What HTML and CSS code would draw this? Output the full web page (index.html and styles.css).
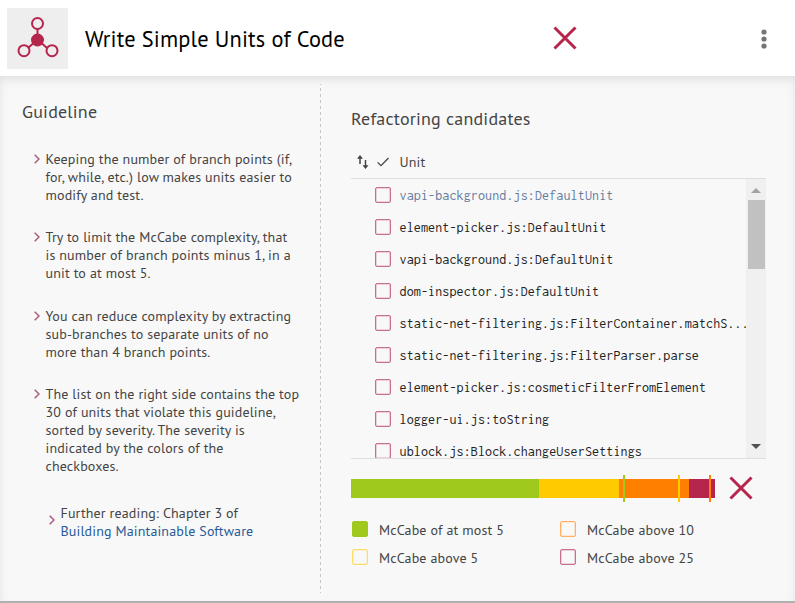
FILE: index.html
```html
<!DOCTYPE html>
<html lang="en">
<head>
<meta charset="utf-8">
<title>Write Simple Units of Code</title>
<link rel="stylesheet" href="styles.css">
</head>
<body>
<svg class="defs" width="0" height="0"><symbol id="cross" viewBox="0 0 24 24"><path d="M1.500 1.500l21 21M22.500 1.500l-21 21" fill="none" stroke="#b5254c" stroke-width="3"/></symbol>
<symbol id="chev" viewBox="0 0 6 10"><path d="M.7 .8L5 5 .7 9.2" fill="none" stroke="#a85b7b" stroke-width="1.5"/></symbol></svg>
<div class="card">
<header class="header">
  <div class="logo"><svg width="61" height="61" viewBox="0 0 61 61" fill="none" stroke="#b5254c" stroke-width="2"><path d="M30.500 21v11M30 32l-9 8M31 32l9 8"/><circle cx="30.500" cy="15.500" r="5.500"/><circle cx="17" cy="42.700" r="5.500"/><circle cx="45" cy="42.700" r="5.500"/><circle cx="30.500" cy="32" r="5.500" fill="#b5254c"/></svg></div>
  <h1 class="title">Write Simple Units of Code</h1>
  <svg class="status" width="24" height="24"><use href="#cross"/></svg>
  <svg class="menu" width="6" height="20" viewBox="0 0 6 20" fill="#757575"><circle cx="3" cy="3" r="2.600"/><circle cx="3" cy="10" r="2.600"/><circle cx="3" cy="17" r="2.600"/></svg>
</header>
<main class="content">
  <section class="guide">
    <h2 class="heading">Guideline</h2>
    <ul class="tips">
      <li class="tip"><svg class="chev"><use href="#chev"/></svg><p>Keeping the number of branch points (if,<br>for, while, etc.) low makes units easier to<br>modify and test.</p></li>
      <li class="tip"><svg class="chev"><use href="#chev"/></svg><p>Try to limit the McCabe complexity, that<br>is number of branch points minus 1, in a<br>unit to at most 5.</p></li>
      <li class="tip tip-low"><svg class="chev"><use href="#chev"/></svg><p>You can reduce complexity by extracting<br>sub-branches to separate units of no<br>more than 4 branch points.</p></li>
      <li class="tip"><svg class="chev"><use href="#chev"/></svg><p>The list on the right side contains the top<br>30 of units that violate this guideline,<br>sorted by severity. The severity is<br>indicated by the colors of the<br>checkboxes.</p></li>
      <li class="tip further"><svg class="chev"><use href="#chev"/></svg><p>Further reading: Chapter 3 of<br><a class="link">Building Maintainable Software</a></p></li>
    </ul>
  </section>
  <svg class="divider" width="1" height="509"><path d="M.5 0V509" stroke="#c6c6c6" stroke-dasharray="3 3" stroke-dashoffset="2"/></svg>
  <section class="candidates">
    <h2 class="heading">Refactoring candidates</h2>
    <div class="table-head">
      <svg width="12" height="14" viewBox="0 0 12 14" fill="none" stroke="#444" stroke-width="1.500"><path d="M3 9V2M8.500 5v7"/><path d="M0 3.700L3 0l3 3.700zM5.500 10.300l3 3.700 3-3.700z" fill="#444" stroke="none"/></svg>
      <svg class="check" width="12" height="10" viewBox="0 0 12 10" fill="none" stroke="#444" stroke-width="1.300"><path d="M.6 5.400L4 8.700 11.500 1"/></svg>
      <span class="label">Unit</span>
    </div>
    <div class="table">
      <ul class="rows">
        <li class="row visited"><i class="box red"></i><span>vapi-background.js:DefaultUnit</span></li>
        <li class="row"><i class="box red"></i><span>element-picker.js:DefaultUnit</span></li>
        <li class="row"><i class="box red"></i><span>vapi-background.js:DefaultUnit</span></li>
        <li class="row"><i class="box red"></i><span>dom-inspector.js:DefaultUnit</span></li>
        <li class="row"><i class="box red"></i><span>static-net-filtering.js:FilterContainer.matchS...</span></li>
        <li class="row"><i class="box red"></i><span>static-net-filtering.js:FilterParser.parse</span></li>
        <li class="row"><i class="box red"></i><span>element-picker.js:cosmeticFilterFromElement</span></li>
        <li class="row"><i class="box red"></i><span>logger-ui.js:toString</span></li>
        <li class="row"><i class="box red"></i><span>ublock.js:Block.changeUserSettings</span></li>
      </ul>
      <div class="scroll"><svg width="10" height="5"><path d="M0 5L5 0l5 5z" fill="#a3a3a3"/></svg><div class="thumb"></div><svg width="10" height="5"><path d="M0 0h10L5 5z" fill="#505050"/></svg></div>
    </div>
    <div class="chart">
      <svg width="364" height="27" viewBox="0 0 364 27" shape-rendering="crispEdges"><path d="M0 4h188v19H0z" fill="#9fc91c"/><path d="M188 4h80v19h-80z" fill="#ffca00"/><path d="M268 4h70v19h-70z" fill="#ff8000"/><path d="M338 4h26v19h-26z" fill="#b5254c"/><path d="M272 0h2v27h-2z" fill="#9fc91c"/><path d="M327 0h2v27h-2z" fill="#ffca00"/><path d="M358 0h2v27h-2z" fill="#ff8000"/></svg>
      <svg width="24" height="24"><use href="#cross"/></svg>
    </div>
    <div class="legend">
      <div class="key"><i class="box green"></i><span>McCabe of at most 5</span></div>
      <div class="key"><i class="box orange"></i><span>McCabe above 10</span></div>
      <div class="key"><i class="box yellow"></i><span>McCabe above 5</span></div>
      <div class="key"><i class="box red"></i><span>McCabe above 25</span></div>
    </div>
  </section>
</main>
</div>
</body>
</html>
```
FILE: styles.css
```css
* { box-sizing: border-box; }
body { margin: 0; background: #b0b0b0; font: 14px/18px "PT Sans", Lato, sans-serif; letter-spacing: .14px; color: #444; overflow: hidden; }
svg { display: block; flex: none; }
.defs { position: absolute; }
h1, h2, p, ul { margin: 0; padding: 0; font-weight: 400; }
ul { list-style: none; }
.card { height: 601px; background: #f8f8f8; box-shadow: 0 1px 2px #888; }
.header { height: 76px; background: #fff; display: flex; align-items: center; padding: 1px 28px 0 7px; }
.logo { width: 61px; height: 61px; background: #eee; }
.title { width: 468px; margin-left: 17px; font-size: 22.4px; line-height: 30px; color: #000; white-space: nowrap; letter-spacing: .14px; }
.status { margin-top: -2px; }
.menu { margin: 1px 0 0 auto; }
.content { height: 525px; display: flex; box-shadow: inset 0 9px 9px -5px #e2e2e2, inset 7px 0 7px -5px #ececec, inset -7px 0 7px -5px #ececec; }
.guide { width: 320px; padding: 24px 0 0 22px; }
.heading { font-size: 18px; line-height: 24px; letter-spacing: .2px; }
.tips { margin-top: 26px; padding-left: 11.5px; }
.tip { display: flex; gap: 6px; margin-bottom: 24px; white-space: nowrap; }
.tip-low { margin-top: 25px; }
.chev { width: 6px; height: 10px; margin-top: 3.5px; }
.further { margin: 29px 0 0 15px; }
.further .chev { margin-top: 10.5px; }
.link { color: #285a96; }
.divider { margin-top: 8px; }
.candidates { width: 415px; margin-left: 30px; padding-top: 31px; }
.table-head { height: 48px; padding: 15px 0 0 6px; display: flex; align-items: center; border-bottom: 1px solid #dedede; }
.check { margin-left: 8px; }
.label { margin-left: 10.5px; }
.table { height: 280px; display: flex; border-bottom: 1px solid #dedede; overflow: hidden; }
.rows { width: 395px; padding-left: 24px; }
.row { height: 32px; display: flex; align-items: center; gap: 8.5px; font: 14px/18px Inconsolata, "Liberation Mono", monospace; letter-spacing: .13px; color: #222; white-space: nowrap; }
.row span { padding-top: 2px; }
.visited { color: #667c9e; }
.box { width: 16px; height: 16px; flex: none; border: 1px solid; border-radius: 2px; }
.red { border-color: #c9708a; box-shadow: inset 0 0 0 .5px #e0a9b8; }
.green { border-color: #9fc91c; background: #9fc91c; }
.orange { border-color: #ffb066; box-shadow: inset 0 0 0 .5px #ffd3a6; }
.yellow { border-color: #ffdc66; box-shadow: inset 0 0 0 .5px #ffecae; }
.scroll { width: 20px; background: #f0f0f0; display: flex; flex-direction: column; align-items: center; padding: 9px 0; }
.thumb { width: 17px; height: 69px; margin: 7px 0 auto; background: #c1c1c1; }
.chart { display: flex; align-items: flex-start; justify-content: space-between; margin-top: 16px; padding-right: 13px; }
.chart svg + svg { margin-top: 1px; }
.legend { display: grid; grid-template-columns: 208px auto; grid-auto-rows: 28px; margin: 14px 0 0 1px; }
.key { display: flex; align-items: center; gap: 11px; white-space: nowrap; }
.key .box { margin-top: -2px; }
```
